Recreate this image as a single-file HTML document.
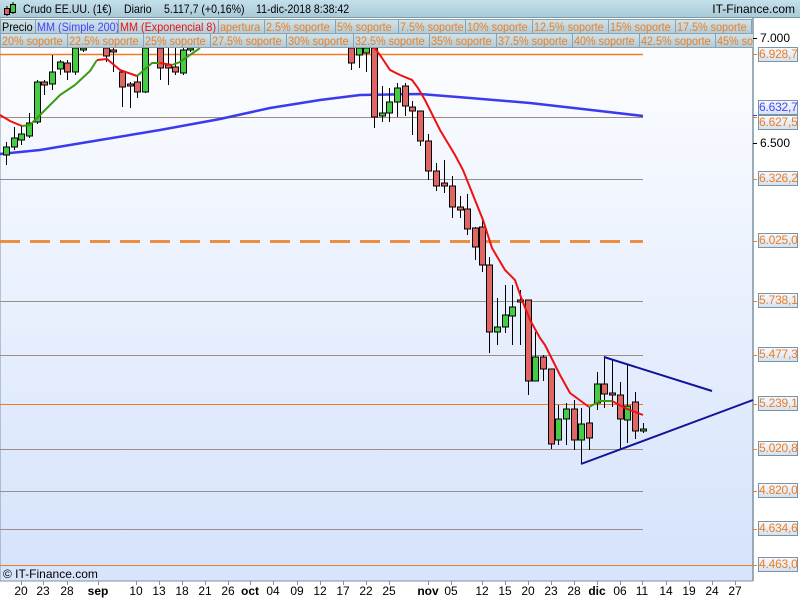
<!DOCTYPE html>
<html><head><meta charset="utf-8">
<style>
*{margin:0;padding:0;box-sizing:border-box}
body{width:800px;height:600px;overflow:hidden;background:#fff;font-family:"Liberation Sans",sans-serif;position:relative}
#chart{position:absolute;left:0;top:0}
.hdr{position:absolute;left:0;top:0;width:800px;height:18px;background:linear-gradient(#c4e0ea,#a9cad8);border-bottom:1px solid #7a9aa8;font-size:12px;color:#000}
.hdr b{font-weight:normal;position:absolute;top:2px;white-space:nowrap;transform:scaleX(.88);transform-origin:0 0}
.row{position:absolute;left:0;height:15px;display:flex;overflow:hidden}
.row span{display:block;flex:none;height:15px;line-height:14px;font-size:12px;color:#ee7d1f;border:1px solid #8aa2b0;border-left:none;background:linear-gradient(#cfe3ea,#b3ccd8);padding:0 1px;white-space:nowrap;overflow:hidden}
.row span i{font-style:normal;display:inline-block;transform:scaleX(.9);transform-origin:0 0}
.row span:first-child{border-left:1px solid #8aa2b0}
.lbl{position:absolute;left:758px;width:40px;height:15px;border:1px solid #7b93a2;background:linear-gradient(#f6f9ff,#d6e2f0);color:#ee7d1f;font-size:12px;line-height:13px;text-align:center;letter-spacing:-0.2px}
.plain{position:absolute;left:760px;font-size:12px;color:#000}
.tick{position:absolute;left:753px;width:4px;height:1px;background:#ee7d1f}
.xl{position:absolute;top:584px;font-size:12px;color:#000;transform:translateX(-50%)}
</style></head><body>
<svg id="chart" width="800" height="600" xmlns="http://www.w3.org/2000/svg">
<defs><linearGradient id="bg" x1="0" y1="0" x2="0" y2="1"><stop offset="0" stop-color="#ffffff"/><stop offset="1" stop-color="#d6e3fc"/></linearGradient></defs>
<rect x="0" y="0" width="753" height="566" fill="url(#bg)"/>
<rect x="0" y="566" width="753" height="15" fill="#d8e4fc"/>
<rect x="753" y="0" width="47" height="600" fill="#fff"/>
<rect x="0" y="581" width="800" height="19" fill="#fff"/>
<line x1="753" y1="0" x2="753" y2="581" stroke="#7b93a2" stroke-width="1.5"/>
<line x1="0" y1="581" x2="753" y2="581" stroke="#7b93a2"/>
<line x1="0" y1="0" x2="0" y2="581" stroke="#7b93a2"/>
<g stroke="#ee7d1f" stroke-width="1">
<line x1="0" y1="54.5" x2="643" y2="54.5" stroke-width="1.5"/>
<line x1="0" y1="117.5" x2="643" y2="117.5" stroke="#a08a7a"/>
<line x1="0" y1="179.5" x2="643" y2="179.5" stroke="#8e8e8e"/>
<line x1="0" y1="241.5" x2="643" y2="241.5" stroke-width="3" stroke-dasharray="20,10" opacity="0.85"/>
<line x1="0" y1="301.5" x2="643" y2="301.5" stroke="#9a8e86"/>
<line x1="0" y1="355.5" x2="643" y2="355.5" stroke="#9a8e86"/>
<line x1="0" y1="404.5" x2="643" y2="404.5"/>
<line x1="0" y1="449.5" x2="643" y2="449.5" stroke="#9a8e86"/>
<line x1="0" y1="491.5" x2="643" y2="491.5" stroke="#9a8e86"/>
<line x1="0" y1="529.5" x2="643" y2="529.5" stroke="#9a8e86"/>
<line x1="0" y1="565.5" x2="753" y2="565.5"/>
</g>
<polyline fill="none" stroke="#3a3aee" stroke-width="2.5" points="0,154 40,150 100,140 160,130 220,119 270,108 320,100 360,95 420,94 470,98 530,103 600,111 643,116"/>
<g id="candles"></g>
<polyline fill="none" stroke="#f01010" stroke-width="2" points="0,115 10,121 22,126"/>
<polyline fill="none" stroke="#3a9a10" stroke-width="2" points="22,126 30,125 37,118 60,95 75,85 90,71 97,60"/>
<polyline fill="none" stroke="#f01010" stroke-width="2" points="97,60 107,59 120,70 137,76"/>
<polyline fill="none" stroke="#3a9a10" stroke-width="2" points="137,76 152,63 160,63"/>
<polyline fill="none" stroke="#f01010" stroke-width="2" points="160,63 172,65"/>
<polyline fill="none" stroke="#3a9a10" stroke-width="2" points="172,65 180,62 200,48"/>
<polyline fill="none" stroke="#f01010" stroke-width="2" points="373,46 380,55 390,70 400,75 412,80 418,88 425,100 440,130 455,155 463,170 475,200 483,220 492,248 505,270 515,280 522,300 530,320 540,338 545,345 560,375 570,393 589,407"/>
<polyline fill="none" stroke="#3a9a10" stroke-width="2" points="589,407 600,401 612,401"/>
<polyline fill="none" stroke="#f01010" stroke-width="2" points="612,401 625,408 643,415"/>
<line x1="604" y1="357" x2="712" y2="391" stroke="#12129a" stroke-width="2"/>
<line x1="581" y1="464" x2="753" y2="400" stroke="#12129a" stroke-width="2"/>
<g id="xt" stroke="#7b93a2"></g>
</svg>

<div class="hdr">
<svg style="position:absolute;left:3px;top:2px" width="14" height="14"><line x1="4" y1="4" x2="4" y2="14" stroke="#000"/><rect x="1.5" y="6.5" width="5" height="6" fill="#e06060" stroke="#000"/><line x1="10" y1="0" x2="10" y2="12" stroke="#000"/><rect x="7.5" y="2.5" width="5" height="8" fill="#40cc40" stroke="#000"/></svg>
<b style="left:23px">Crudo EE.UU. (1€)</b><b style="left:124px">Diario</b><b style="left:164px">5.117,7 (+0,16%)</b><b style="left:256px">11-dic-2018 8:38:42</b>
<b style="left:auto;right:5px;transform:none">IT-Finance.com</b>
</div>
<div class="row" style="top:19px;width:753px">
<span style="width:36px;color:#000"><i>Precio</i></span><span style="width:83px;color:#4444ff"><i>MM (Simple 200)</i></span><span style="width:100px;color:#ee1111"><i>MM (Exponencial 8)</i></span><span style="width:46px"><i>apertura</i></span><span style="width:71px"><i>2.5% soporte</i></span><span style="width:63px"><i>5% soporte</i></span><span style="width:67px"><i>7.5% soporte</i></span><span style="width:67px"><i>10% soporte</i></span><span style="width:76px"><i>12.5% soporte</i></span><span style="width:67px"><i>15% soporte</i></span><span style="width:76px"><i>17.5% soporte</i></span>
</div>
<div class="row" style="top:33px;width:753px">
<span style="width:68px"><i>20% soporte</i></span><span style="width:76px"><i>22.5% soporte</i></span><span style="width:67px"><i>25% soporte</i></span><span style="width:76px"><i>27.5% soporte</i></span><span style="width:67px"><i>30% soporte</i></span><span style="width:76px"><i>32.5% soporte</i></span><span style="width:67px"><i>35% soporte</i></span><span style="width:76px"><i>37.5% soporte</i></span><span style="width:67px"><i>40% soporte</i></span><span style="width:76px"><i>42.5% soporte</i></span><span style="width:40px"><i>45% soporte</i></span>
</div>

<div class="plain" style="top:31px">7.000</div><div class="tick" style="top:38px;background:#000"></div>
<div class="plain" style="top:136px">6.500</div><div class="tick" style="top:143px;background:#000"></div>
<div class="tick" style="top:54px"></div><div class="lbl" style="top:47px">6.928,7</div>
<div class="tick" style="top:115px;background:#3a3aee"></div><div class="lbl" style="top:100px;color:#4444ff">6.632,7</div>
<div class="tick" style="top:117px"></div><div class="lbl" style="top:115px">6.627,5</div>
<div class="tick" style="top:179px"></div><div class="lbl" style="top:171px">6.326,2</div>
<div class="tick" style="top:241px"></div><div class="lbl" style="top:233px">6.025,0</div>
<div class="tick" style="top:301px"></div><div class="lbl" style="top:293px">5.738,1</div>
<div class="tick" style="top:355px"></div><div class="lbl" style="top:347px">5.477,3</div>
<div class="tick" style="top:404px"></div><div class="lbl" style="top:396px">5.239,1</div>
<div class="tick" style="top:449px"></div><div class="lbl" style="top:441px">5.020,8</div>
<div class="tick" style="top:491px"></div><div class="lbl" style="top:483px">4.820,0</div>
<div class="tick" style="top:529px"></div><div class="lbl" style="top:521px">4.634,6</div>
<div class="tick" style="top:565px"></div><div class="lbl" style="top:557px">4.463,0</div>

<div style="position:absolute;left:3px;top:567px;font-size:12px;color:#000">© IT-Finance.com</div>
<div id="xlabels"></div>

<script>
var C=[
[6,147,155,142,165,1],[14,138,147,127,150,1],[21,134,140,125,145,1],[29,123,136,113,138,1],[37,82,122,80,124,1],
[44,82,85,80,95,0],[52,72,84,55,90,1],[60,62,69,60,75,1],[67,63,72,60,80,0],[75,48,72,45,75,1],
[83,48,50,45,52,1],[106,48,56,48,62,0],[113,50,52,48,72,0],[122,72,87,70,107,0],[130,84,86,82,108,0],[137,82,92,75,98,0],
[145,48,92,45,93,1],[160,48,68,45,80,0],[168,65,68,45,85,0],[175,67,72,45,75,0],[183,50,73,45,75,1],[190,48,50,45,52,1],
[351,48,63,48,70,0],[359,48,55,48,68,1],[366,48,53,48,72,1],[374,48,117,48,128,0],[382,113,116,86,122,1],[389,102,113,88,122,1],
[397,88,102,83,117,1],[405,86,106,83,116,0],[412,107,111,101,135,0],[420,111,141,111,146,0],[428,141,171,134,180,0],
[436,171,186,163,191,0],[444,183,186,160,193,0],[452,186,207,176,218,0],[460,207,210,196,218,0],[467,209,229,194,235,0],
[475,228,247,227,260,0],[482,227,265,217,272,0],[489,265,332,257,353,0],[497,327,332,298,345,1],[505,315,327,285,333,1],
[512,307,316,285,345,1],[520,300,302,290,345,0],[528,300,381,300,395,0],[535,357,381,332,381,1],[543,357,369,355,381,0],
[551,369,444,369,449,0],[558,419,440,405,445,1],[566,409,419,403,445,1],[574,409,440,400,450,0],[581,424,440,408,463,1],
[589,423,438,407,450,0],[597,384,403,372,410,1],[604,384,394,356,408,0],[612,393,395,360,407,0],[620,395,419,382,450,0],
[627,406,420,364,443,1],[635,402,431,392,439,0],[643,429,431,423,433,1]];
var s='';
C.forEach(function(c){var x=c[0],t=Math.max(c[1],48),b=c[2],hi=Math.max(c[3],48),lo=c[4];
s+='<line x1="'+(x+.5)+'" y1="'+hi+'" x2="'+(x+.5)+'" y2="'+lo+'" stroke="#000"/>';
s+='<rect x="'+(x-2.5)+'" y="'+t+'" width="6" height="'+Math.max(b-t,1.5)+'" fill="'+(c[5]?'#44cc44':'#e06666')+'" stroke="#000" stroke-width="1"/>';});
document.getElementById('candles').innerHTML=s;
var X=[[21,'20'],[43,'23'],[67,'28'],[98,'sep',1],[136,'10'],[159,'13'],[182,'18'],[205,'21'],[228,'26'],[250,'oct',1],[273,'04'],[297,'09'],[320,'12'],[343,'17'],[366,'22'],[389,'25'],[428,'nov',1],[451,'05'],[482,'12'],[505,'15'],[528,'20'],[551,'23'],[574,'28'],[597,'dic',1],[620,'06'],[642,'11'],[666,'14'],[689,'19'],[712,'24'],[735,'27']];
var h='',t='';
X.forEach(function(a){h+='<div class="xl" style="left:'+a[0]+'px;'+(a[2]?'font-weight:bold':'')+'">'+a[1]+'</div>';
t+='<line x1="'+(a[0]+.5)+'" y1="581" x2="'+(a[0]+.5)+'" y2="585"/>';});
document.getElementById('xlabels').innerHTML=h;
document.getElementById('xt').innerHTML=t;
</script>
</body></html>
